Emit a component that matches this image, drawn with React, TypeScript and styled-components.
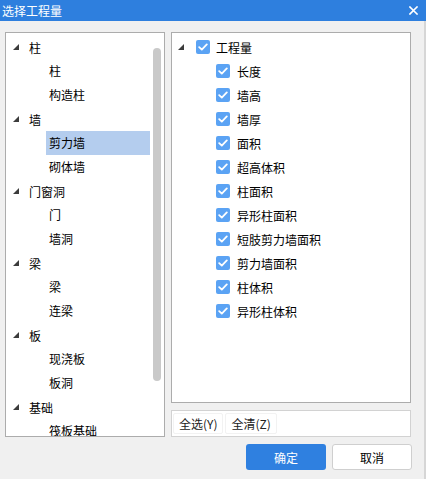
import React from "react";
import styled, { createGlobalStyle } from "styled-components";

const GlobalStyle = createGlobalStyle`
    html, body {
        margin: 0;
        padding: 0;
        background: #f0f0f0;
    }
    body {
        font-family: "Noto Sans CJK SC", "Microsoft YaHei", sans-serif;
        font-size: 12px;
        color: #000;
    }
`

type Node = { label: string; children: string[] }

const tree: Node[] = [
    { label: "柱", children: ["柱", "构造柱"] },
    { label: "墙", children: ["剪力墙", "砌体墙"] },
    { label: "门窗洞", children: ["门", "墙洞"] },
    { label: "梁", children: ["梁", "连梁"] },
    { label: "板", children: ["现浇板", "板洞"] },
    { label: "基础", children: ["筏板基础"] },
]

const quantities = [
    "长度", "墙高", "墙厚", "面积", "超高体积", "柱面积",
    "异形柱面积", "短肢剪力墙面积", "剪力墙面积", "柱体积", "异形柱体积",
]

const Expander = () => (
    <svg width="6" height="6" viewBox="0 0 6 6">
        <polygon points="6,0 6,6 0,6" fill="#3c3c3c" />
    </svg>
)

const Check = () => (
    <CheckBox>
        <svg width="10" height="8" viewBox="0 0 10 8">
            <path d="M1.2 4.2 L3.8 6.6 L8.8 1.4" fill="none" stroke="#fff" strokeWidth="1.8" strokeLinecap="round" strokeLinejoin="round" />
        </svg>
    </CheckBox>
)

const App = () => {
    return (
        <>
            <GlobalStyle />
            <Window>
                <TitleBar>
                    <Title>选择工程量</Title>
                    <CloseButton>
                        <svg width="9" height="9" viewBox="0 0 9 9">
                            <path d="M1 1 L8 8 M8 1 L1 8" stroke="#fff" strokeWidth="1.6" strokeLinecap="square" />
                        </svg>
                    </CloseButton>
                </TitleBar>
                <Body>
                    <TreePanel>
                        {tree.map((node) => (
                            <React.Fragment key={node.label}>
                                <ParentRow>
                                    <Expander />
                                    <span>{node.label}</span>
                                </ParentRow>
                                {node.children.map((child) => (
                                    <ChildRow key={node.label + child}>
                                        <ChildLabel $selected={child === "剪力墙"}>{child}</ChildLabel>
                                    </ChildRow>
                                ))}
                            </React.Fragment>
                        ))}
                        <ScrollThumb />
                    </TreePanel>
                    <RightColumn>
                        <CheckPanel>
                            <RootRow>
                                <Expander />
                                <Check />
                                <span>工程量</span>
                            </RootRow>
                            {quantities.map((q) => (
                                <CheckRow key={q}>
                                    <Check />
                                    <span>{q}</span>
                                </CheckRow>
                            ))}
                        </CheckPanel>
                        <SelectBar>
                            <FlatButton>全选(Y)</FlatButton>
                            <FlatButton>全清(Z)</FlatButton>
                        </SelectBar>
                    </RightColumn>
                </Body>
                <Footer>
                    <PrimaryButton>确定</PrimaryButton>
                    <DefaultButton>取消</DefaultButton>
                </Footer>
            </Window>
        </>
    )
}

export default App;

const Window = styled.div`
    width: 426px;
    height: 479px;
    display: flex;
    flex-direction: column;
    background: #f0f0f0;
    box-sizing: border-box;
    border-right: 2px solid #d6d6d6;
`
const TitleBar = styled.div`
    height: 21px;
    background: #2e7fde;
    color: #fff;
    display: flex;
    align-items: center;
    justify-content: space-between;
    padding: 0 8px 0 2px;
    margin-right: -2px;
`
const Title = styled.div`
    font-size: 12px;
    line-height: 21px;
`
const CloseButton = styled.div`
    display: flex;
    align-items: center;
    padding-bottom: 1px;
`
const Body = styled.div`
    display: grid;
    grid-template-columns: 160px 240px;
    column-gap: 6px;
    padding: 11px 0 0 5px;
`
const Panel = styled.div`
    background: #fff;
    border: 1px solid #acacac;
    box-sizing: border-box;
    padding-top: 2px;
    overflow: hidden;
`
const TreePanel = styled(Panel)`
    position: relative;
    height: 405px;
`
const ScrollThumb = styled.div`
    position: absolute;
    left: 147px;
    top: 15px;
    width: 8px;
    height: 333px;
    border-radius: 4px;
    background: #c9c9c9;
`
const Row = styled.div`
    height: 24px;
    display: flex;
    align-items: center;
    white-space: nowrap;
`
const ParentRow = styled(Row)`
    padding-left: 7px;
    gap: 10px;
`
const ChildRow = styled(Row)`
    padding-left: 40px;
`
const ChildLabel = styled.div<{ $selected?: boolean }>`
    width: 104px;
    height: 24px;
    line-height: 24px;
    padding-left: 3px;
    box-sizing: border-box;
    background: ${(p) => (p.$selected ? "#b4cdee" : "transparent")};
`
const RightColumn = styled.div`
    display: flex;
    flex-direction: column;
    gap: 7px;
`
const CheckPanel = styled(Panel)`
    height: 371px;
`
const RootRow = styled(Row)`
    padding-left: 6px;
    gap: 12px;
    & > span { margin-left: -6px; }
`
const CheckRow = styled(Row)`
    padding-left: 44px;
    gap: 7px;
`
const CheckBox = styled.div`
    width: 14px;
    height: 14px;
    border-radius: 2px;
    background: #5ba3f4;
    display: flex;
    align-items: center;
    justify-content: center;
    flex-shrink: 0;
`
const SelectBar = styled.div`
    height: 27px;
    box-sizing: border-box;
    background: #fff;
    border: 1px solid #d2d2d2;
    display: flex;
    align-items: center;
    gap: 2px;
    padding-left: 1px;
`
const FlatButton = styled.div`
    height: 21px;
    padding: 0 5px;
    box-sizing: border-box;
    border: 1px solid #f2f2f2;
    border-radius: 2px;
    display: flex;
    align-items: center;
    color: #222;
`
const Footer = styled.div`
    display: flex;
    justify-content: flex-end;
    gap: 6px;
    padding: 7px 12px 0 0;
`
const BaseButton = styled.div`
    width: 80px;
    height: 26px;
    box-sizing: border-box;
    border-radius: 3px;
    display: flex;
    align-items: center;
    justify-content: center;
    font-size: 12px;
`
const PrimaryButton = styled(BaseButton)`
    background: #2f80e0;
    color: #fff;
`
const DefaultButton = styled(BaseButton)`
    background: #fff;
    border: 1px solid #cfcfcf;
    color: #000;
`
